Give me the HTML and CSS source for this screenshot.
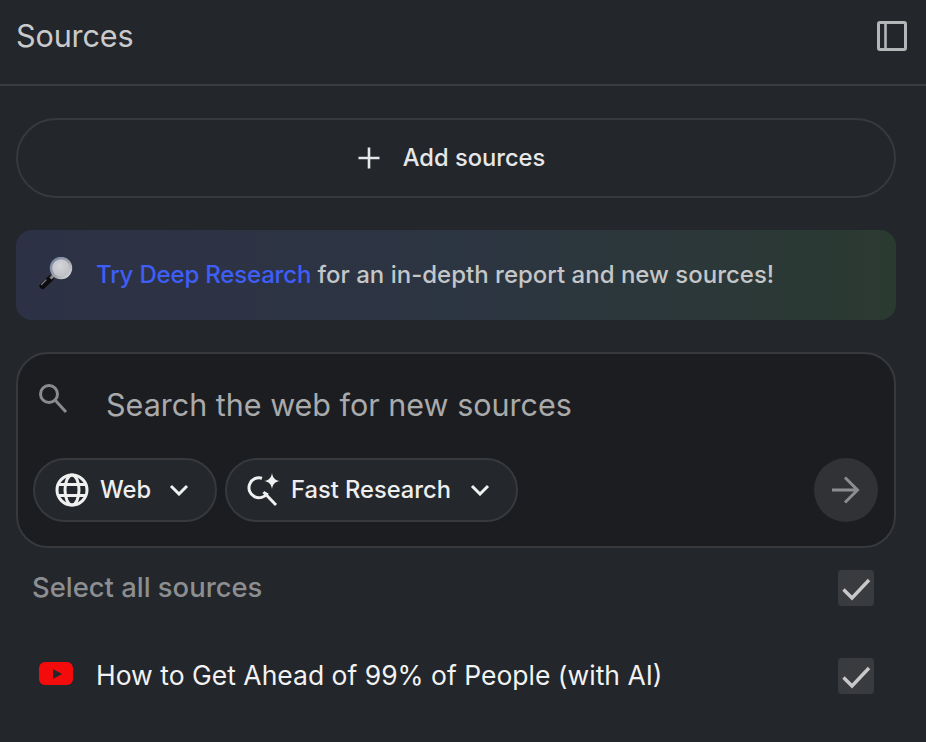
FILE: index.html
```html
<!DOCTYPE html>
<html lang="en">
<head>
<meta charset="utf-8">
<title>Sources</title>
<link rel="stylesheet" href="styles.css">
</head>
<body>
<main class="panel">
  <header class="panel-header">
    <h1 class="panel-title">Sources</h1>
    <svg class="panel-toggle" viewBox="0 0 30 30" width="30" height="30" aria-hidden="true">
      <rect x="1.500" y="1.500" width="27" height="27" rx="1.500" fill="none" stroke="#b5b6b8" stroke-width="3"/>
      <path d="M8.500 2v26" fill="none" stroke="#b5b6b8" stroke-width="2.600"/>
    </svg>
  </header>
  <div class="panel-body">
    <button class="add-button" type="button">
      <svg viewBox="0 0 24 24" width="24" height="24" aria-hidden="true"><path d="M12 1.500v21M1.500 12h21" stroke="#e6e7e8" stroke-width="2.600" fill="none"/></svg>
      <span class="label-lift">Add sources</span>
    </button>
    <div class="banner">
      <svg class="banner-icon" viewBox="0 0 36 34" width="36" height="34" aria-hidden="true">
        <defs>
          <radialGradient id="lens" cx="45%" cy="40%" r="60%"><stop offset="0" stop-color="#d3d4d8"/><stop offset="1" stop-color="#bcbec4"/></radialGradient>
          <linearGradient id="rim" x1="0" y1="0" x2="1" y2="1"><stop offset="0" stop-color="#6f83a3"/><stop offset="0.6" stop-color="#a6a8ae"/><stop offset="1" stop-color="#e2e2e2"/></linearGradient>
        </defs>
        <path d="M4.500 29 12.500 21.500" stroke="#0c0c0e" stroke-width="6" stroke-linecap="round"/>
        <path d="M3.500 27.500 8 23" stroke="#73757a" stroke-width="1.400" stroke-linecap="round"/>
        <path d="M12.500 21.500 16 18" stroke="#85878c" stroke-width="3"/>
        <circle cx="23" cy="11" r="10" fill="url(#lens)" stroke="url(#rim)" stroke-width="2.400"/>
      </svg>
      <p class="banner-text"><span class="banner-link">Try Deep Research</span> for an in-depth report and new sources!</p>
    </div>
    <section class="search-box">
      <div class="search-line">
        <svg class="search-icon" viewBox="0 0 32 32" width="32" height="32" aria-hidden="true">
          <circle cx="12" cy="11" r="8.500" fill="none" stroke="#8a8b8d" stroke-width="3"/>
          <path d="M18 17 29 29" stroke="#8a8b8d" stroke-width="3" fill="none"/>
        </svg>
        <span class="search-placeholder">Search the web for new sources</span>
      </div>
      <div class="search-controls">
        <button class="chip chip-web" type="button">
          <svg viewBox="0 0 34 34" width="34" height="34" aria-hidden="true">
            <g fill="none" stroke="#f0f0f1" stroke-width="3">
              <circle cx="17" cy="17" r="15"/>
              <ellipse cx="17" cy="17" rx="7" ry="15"/>
              <path d="M3.500 11.500h27M3.500 22.500h27"/>
            </g>
          </svg>
          <span class="label-lift">Web</span>
          <svg class="chev" viewBox="0 0 20 12" width="20" height="12" aria-hidden="true"><path d="M2 2l8 8 8-8" fill="none" stroke="#f0f0f1" stroke-width="3"/></svg>
        </button>
        <button class="chip chip-fast" type="button">
          <svg viewBox="0 0 34 34" width="34" height="34" aria-hidden="true">
            <path d="M15 5.200A10 10 0 1 0 20.500 20" fill="none" stroke="#f0f0f1" stroke-width="3"/>
            <path d="M16.500 19 29 32" fill="none" stroke="#f0f0f1" stroke-width="3"/>
            <path d="M25 0c.8 5 3 7.300 8 8-5 .8-7.200 3-8 8-.8-5-3-7.200-8-8 5-.7 7.200-3 8-8z" fill="#f0f0f1"/>
          </svg>
          <span class="label-lift">Fast Research</span>
          <svg class="chev" viewBox="0 0 20 12" width="20" height="12" aria-hidden="true"><path d="M2 2l8 8 8-8" fill="none" stroke="#f0f0f1" stroke-width="3"/></svg>
        </button>
        <button class="send" type="button" aria-label="Submit">
          <svg viewBox="0 0 28 28" width="28" height="28" aria-hidden="true"><path d="M0 14h26M13 1.500 25.500 14 13 26.500" fill="none" stroke="#8c8d8f" stroke-width="3"/></svg>
        </button>
      </div>
    </section>
    <div class="row row-all">
      <span class="row-label">Select all sources</span>
      <span class="check"><svg viewBox="0 0 36 36" width="36" height="36" aria-hidden="true"><path d="M5.500 19.500 14 28 31 10" fill="none" stroke="#c8c8c9" stroke-width="3.400"/></svg></span>
    </div>
    <div class="row row-source">
      <svg class="yt" viewBox="0 0 34 23" width="34" height="23" aria-hidden="true">
        <rect width="34" height="23" rx="6" fill="#f40b0b"/>
        <path d="M14 7v10l9-5z" fill="#26272b"/>
      </svg>
      <span class="source-name">How to Get Ahead of 99% of People (with AI)</span>
      <span class="check"><svg viewBox="0 0 36 36" width="36" height="36" aria-hidden="true"><path d="M5.500 19.500 14 28 31 10" fill="none" stroke="#c8c8c9" stroke-width="3.400"/></svg></span>
    </div>
  </div>
</main>
</body>
</html>
```
FILE: styles.css
```css
* { box-sizing: border-box; }
html, body { margin: 0; height: 100%; }
body {
  background: #23262a;
  font-family: Inter, "Noto Sans", sans-serif;
  color: #e6e7e8;
  overflow: hidden;
}
button { font: inherit; color: inherit; cursor: pointer; }
.panel { display: flex; flex-direction: column; height: 742px; }
.panel-header {
  display: flex;
  align-items: center;
  justify-content: space-between;
  height: 86px;
  padding: 0 19px 12px 16px;
  border-bottom: 2px solid #3a3c40;
}
.panel-title {
  margin: 0 0 2px;
  font-size: 30.600px;
  font-weight: 400;
  letter-spacing: -0.150px;
  color: #c9cacb;
}
.panel-body {
  display: flex;
  flex-direction: column;
  padding: 32px 30px 0 16px;
}
.label-lift { padding-bottom: 2px; }
.add-button {
  display: flex;
  align-items: center;
  justify-content: center;
  gap: 22px;
  height: 80px;
  padding: 0 10px 0 0;
  background: transparent;
  border: 2px solid #37393d;
  border-radius: 40px;
  font-size: 23.700px;
  font-weight: 500;
  color: #e6e7e8;
}
.banner {
  display: flex;
  align-items: center;
  gap: 22px;
  height: 90px;
  margin-top: 32px;
  padding: 0 22px;
  border-radius: 16px;
  background: linear-gradient(90deg, #2d3145 0%, #2c3542 50%, #2b3a31 100%);
}
.banner-icon { flex: none; margin-top: -2px; }
.banner-text {
  margin: 0 0 2px;
  font-size: 24px;
  font-weight: 500;
  color: #c5c6c7;
  white-space: nowrap;
}
.banner-link { color: #3f5ef8; letter-spacing: -0.180px; }
.search-box {
  display: flex;
  flex-direction: column;
  height: 196px;
  margin-top: 32px;
  padding: 0 16px 24px 15px;
  background: #1b1d21;
  border: 2px solid #37393d;
  border-radius: 32px;
}
.search-line {
  display: flex;
  align-items: center;
  height: 104px;
  padding: 0 0 0 4px;
}
.search-icon { flex: none; margin-top: -14px; }
.search-placeholder {
  margin: 0 0 4px 37px;
  font-size: 30.500px;
  color: #a9aaab;
  white-space: nowrap;
}
.search-controls { display: flex; align-items: center; gap: 8px; }
.chip {
  display: flex;
  align-items: center;
  height: 64px;
  padding: 0 0 0 20px;
  gap: 11px;
  background: #24272b;
  border: 2px solid #37393d;
  border-radius: 32px;
  font-size: 23.700px;
  font-weight: 500;
  color: #eeeeef;
}
.chip-web { width: 184px; }
.chip-fast { width: 293px; gap: 10px; }
.chev { margin-left: 7px; }
.chip-fast .chev { margin-left: 9px; }
.send {
  display: flex;
  align-items: center;
  justify-content: center;
  width: 64px;
  height: 64px;
  margin-left: auto;
  padding: 0;
  background: #303236;
  border: 0;
  border-radius: 50%;
}
.row { display: flex; align-items: center; justify-content: space-between; }
.row-all { height: 80px; padding-left: 16px; }
.row-label { font-size: 27.400px; font-weight: 500; color: #8c8e91; padding-bottom: 2px; }
.row-source { height: 88px; padding-left: 23px; margin-top: 4px; }
.source-name { flex: 1; margin-left: 23px; font-size: 26.500px; color: #f2f2f3; white-space: nowrap; padding-bottom: 2px; }
.yt { flex: none; margin-top: -6px; }
.check {
  display: block;
  flex: none;
  width: 36px;
  height: 36px;
  margin-right: 22px;
  background: #3a3b3f;
  border-radius: 4px;
}
.check svg { display: block; }
```
